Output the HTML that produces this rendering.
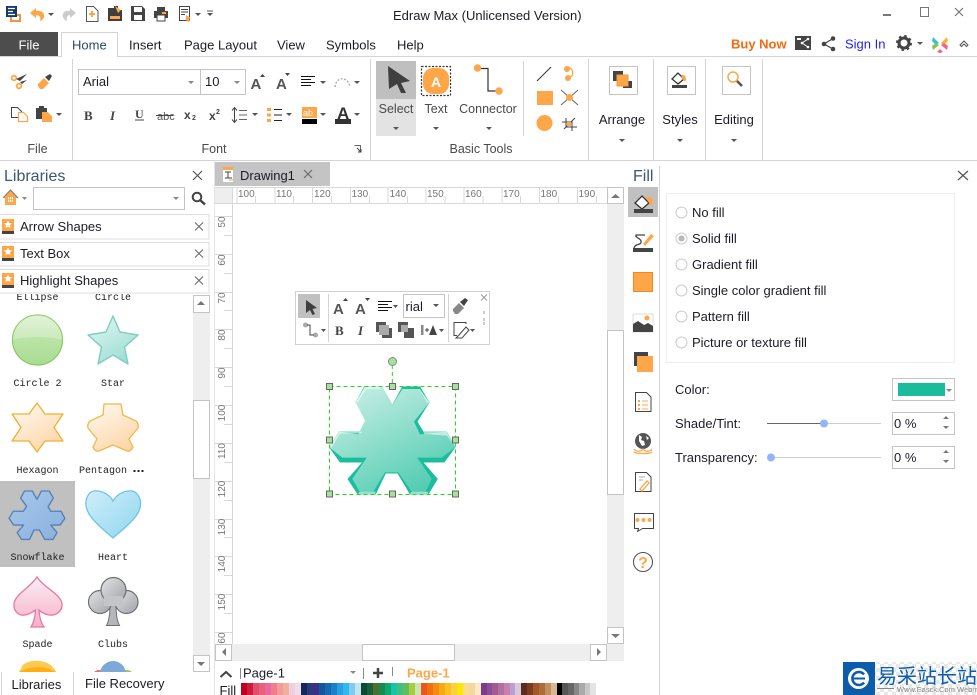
<!DOCTYPE html>
<html><head><meta charset="utf-8"><title>Edraw Max</title>
<style>
html,body{margin:0;padding:0;background:#fff;width:977px;height:695px;overflow:hidden}
svg{position:absolute;left:0;top:0}
text{font-family:"Liberation Sans","Noto Sans CJK SC",sans-serif;font-size:13px;fill:#1c1c28}
.m{font-family:"Liberation Mono",monospace;font-size:10px;fill:#222;text-anchor:middle}
.r{font-size:10px;fill:#777}
.mid{text-anchor:middle}
.g{fill:#4a4a4a;font-size:12.5px}
.c{fill:#555}
.o{fill:#ffa748}
.d{fill:#444}
.ln{stroke:#d4d4d4;stroke-width:1;fill:none}
.b{fill:#fff;stroke:#c4c4c4;stroke-width:1}
.tk{stroke:#d8d8d8;stroke-width:1;fill:none}
.h{fill:#a6e29a;stroke:#666;stroke-width:1}
#sw{position:absolute;left:241px;top:683px;height:12px;display:flex}
#sw i{display:block;width:6px;height:12px;flex:none}
#sw i:nth-child(n+41):nth-child(-n+47){width:5.714px}
#sw i:nth-child(n+54){width:5.571px}
</style></head><body>
<svg width="977" height="695" viewBox="0 0 977 695" xmlns="http://www.w3.org/2000/svg">
<defs>
<linearGradient id="tf" x1="0.2" y1="0" x2="0.8" y2="1"><stop offset="0" stop-color="#c6eee4"/><stop offset="1" stop-color="#4ecbb0"/></linearGradient>
<linearGradient id="gr" x1="0" y1="0" x2="0" y2="1"><stop offset="0" stop-color="#d8f0cc"/><stop offset=".45" stop-color="#bce4a8"/><stop offset="1" stop-color="#a8dc92"/></linearGradient>
<linearGradient id="te" x1="0.2" y1="0" x2="0.8" y2="1"><stop offset="0" stop-color="#e0f5f1"/><stop offset="1" stop-color="#98dcd2"/></linearGradient>
<linearGradient id="or" x1="0.2" y1="0" x2="0.8" y2="1"><stop offset="0" stop-color="#fff8ee"/><stop offset="1" stop-color="#fdd4a4"/></linearGradient>
<linearGradient id="bl" x1="0" y1="0" x2="1" y2="1"><stop offset="0" stop-color="#a8c8ea"/><stop offset="1" stop-color="#88b0de"/></linearGradient>
<linearGradient id="he" x1="0" y1="0" x2="1" y2="1"><stop offset="0" stop-color="#d0eef9"/><stop offset="1" stop-color="#8fd6f0"/></linearGradient>
<linearGradient id="pk" x1="0" y1="0" x2="0" y2="1"><stop offset="0" stop-color="#fdeef3"/><stop offset="1" stop-color="#f5b0c8"/></linearGradient>
<linearGradient id="gy" x1="0" y1="0" x2="1" y2="1"><stop offset="0" stop-color="#e4e4e6"/><stop offset="1" stop-color="#a0a2a6"/></linearGradient>
<pattern id="chk" width="8" height="8" patternUnits="userSpaceOnUse"><rect width="8" height="8" fill="#fff"/><rect width="4" height="4" fill="#e8e8e8"/><rect x="4" y="4" width="4" height="4" fill="#e8e8e8"/></pattern>
<clipPath id="lib"><rect x="0" y="294" width="193" height="378"/></clipPath>
<clipPath id="ftxt"><rect x="215" y="680" width="30" height="15"/></clipPath>
</defs>

<!-- title / quick access -->
<text x="393" y="20">Edraw Max (Unlicensed Version)</text>
<path d="M883 15h8" stroke="#777" stroke-width="2"/>
<rect x="920.500" y="7.500" width="8" height="9" fill="none" stroke="#777"/>
<path d="M955 8l8 8M963 8l-8 8" stroke="#777" stroke-width="1.200"/>

<path d="M14 15h6v6H11v-4" fill="none" stroke="#f5923e" stroke-width="2"/>
<rect x="6" y="6" width="11" height="11" fill="#173a6e"/>
<path d="M8 8.500h7M8 11.500h5M8 14.500h7" stroke="#fff" stroke-width="1.300"/>
<path d="M30 13l6-5v3c5-1 9 2 8 6-.5 2-2 3.500-4 4 1-3 0-6-4-6v3z" fill="#ffa748"/>
<path class="c" d="M48 13h6l-3 3z"/>
<path d="M76 13l-6-5v3c-5-1-8 2-7 6 .5 2 2 3.500 4 4-1-3 0-6 3-6v3z" fill="#ccc"/>
<path d="M86.500 6.500h7l4.500 4.500v10.500h-11.500z" fill="#fff" stroke="#555"/>
<path d="M92 11v6M89 14h6" stroke="#ffa748" stroke-width="2"/>
<path d="M108 8h6v-2h4v4h4v11h-14z" fill="#3f3f3f"/><path d="M115 6l6 4-3 3z" class="o"/><rect x="110" y="16" width="10" height="3" fill="#ffa748"/>
<path d="M131 6h11l3 3v12h-14z" fill="#444"/><rect x="134" y="7" width="8" height="5" fill="#fff"/><rect x="134" y="15" width="8" height="5" fill="#fff"/>
<rect x="154" y="11" width="14" height="7" fill="#444"/><rect x="157" y="7" width="8" height="4" fill="#444"/><rect x="157" y="15" width="8" height="6" fill="#fff" stroke="#444"/><rect x="162" y="12" width="4" height="2" fill="#ffa748"/>
<rect x="179.500" y="6.500" width="10" height="14" fill="#fff" stroke="#444"/><path d="M181 9.500h7M181 12h7M181 14.500h4" stroke="#444"/><path d="M186 15l5 3-2 1 1 2-2 1-1-2-1 1z" class="o"/>
<path class="c" d="M195 13h6l-3 3z"/>
<path class="c" d="M207 13h6l-3 3zM207 10.500h6v1h-6z"/>

<!-- tabs -->
<rect x="0" y="32" width="58" height="24" fill="#4d4d4d"/>
<text x="29" y="49.500" class="mid" style="fill:#fff">File</text>
<path d="M0 56.500H977" stroke="#d4d4d4"/>
<path d="M61.500 56.500V32.500H117.500V56.500" fill="#fff" stroke="#d4d4d4"/><path d="M62 56.500h55" stroke="#fff"/>
<text x="72" y="49.500" style="fill:#2a4a6a">Home</text>
<text x="129" y="49.500">Insert</text>
<text x="184" y="49.500">Page Layout</text>
<text x="277" y="49.500">View</text>
<text x="326" y="49.500">Symbols</text>
<text x="397" y="49.500">Help</text>
<text x="731" y="48.500" style="fill:#f26a0f;font-weight:bold;font-size:13px">Buy Now</text>
<rect x="795" y="36" width="16" height="14" fill="#444"/><path d="M797 38h4v2h-4z" fill="#fff"/><circle cx="808" cy="39" r="1.300" fill="#fff"/><circle cx="808" cy="47" r="1.300" fill="#fff"/><circle cx="802" cy="43" r="1.300" fill="#fff"/><path d="M808 39l-6 4 6 4" stroke="#fff" fill="none"/>
<circle cx="833" cy="38.500" r="2.300" fill="#444"/><circle cx="833" cy="49" r="2.300" fill="#444"/><circle cx="824" cy="44" r="2.300" fill="#444"/><path d="M833 38.500l-9 5.500 9 5" stroke="#444" fill="none" stroke-width="1.200"/>
<text x="845" y="48.500" style="fill:#1f1ff0">Sign In</text>
<circle cx="904" cy="43" r="5" fill="none" stroke="#444" stroke-width="3"/><circle cx="904" cy="43" r="7" fill="none" stroke="#444" stroke-width="2" stroke-dasharray="2.500 3"/>
<path class="c" d="M917 42h6l-3 3z"/>
<path d="M933 37l6 6-3 2-4-4z" fill="#35c0d8"/><path d="M947 37l-6 6 3 2 4-4z" fill="#ffb030"/><path d="M933 50l6-5-3-2-4 3z" fill="#8bc34a"/><path d="M947 50l-6-5 3-2 4 3z" fill="#f4608e"/><path d="M937 52l3-3 3 3-3 1z" fill="#f4608e"/>
<path d="M960 45l4-4 4 4-1.500 1.500-2.500-2.500-2.500 2.500z" fill="none" stroke="#555"/>

<!-- ribbon separators -->
<path class="ln" d="M72.500 59V160M370.500 59V160M523.500 61V136M588.500 59V160M653.500 59V160M705.500 59V160M762.500 59V160"/>
<path d="M0 160.500H977" stroke="#d4d4d4"/>

<!-- File group -->
<circle cx="14" cy="78" r="2.300" fill="none" stroke="#ffa748" stroke-width="1.800"/><circle cx="19" cy="86" r="2.300" fill="none" stroke="#ffa748" stroke-width="1.800"/>
<path d="M16 79l11-5-7 7zM20 82l7-2-5 4z" fill="#444"/>
<path d="M38 84l6-6 5 5-6 6h-3l-2-3z" class="o"/><path d="M45 77l5-3 2 2-3 5z" fill="#444"/>
<path d="M11.500 107.500h6l4 4v6h-10z" fill="#fff" stroke="#444"/><path d="M18.500 112.500h5l4 4v5h-9z" fill="#fff" stroke="#ffa748" stroke-width="1.200"/>
<rect x="36" y="108" width="11" height="11" fill="#444"/><rect x="39" y="106" width="5" height="3" fill="#444"/><path d="M42.500 112.500h5l4 4v5h-9z" fill="#ffa748" stroke="#ffa748"/>
<path class="c" d="M56 113h6l-3 3z"/>
<text x="37.500" y="153" class="mid g">File</text>

<!-- Font group -->
<rect class="b" x="78.500" y="69.500" width="122" height="25"/>
<rect class="b" x="200.500" y="69.500" width="45" height="25"/>
<text x="83" y="86">Arial</text>
<text x="205" y="86">10</text>
<path class="c" d="M188 81h6l-3 3zM234 81h6l-3 3z" style="fill:#888"/>
<text x="250.500" y="89" style="font-size:15px;fill:#555;font-weight:bold">A</text><path class="d" d="M260 77h5l-2.500-3z"/>
<text x="276" y="89" style="font-size:15px;fill:#555;font-weight:bold">A</text><path class="d" d="M285 73h5l-2.500 3z"/>
<path d="M301 76.500h14M301 79.500h10M301 82.500h14M301 85.500h10" stroke="#111"/>
<path class="c" d="M320 81h6l-3 3z"/>
<path d="M335 87c1-11 13-11 15 0" fill="none" stroke="#aaa" stroke-dasharray="2 1.500" stroke-width="1.300"/>
<path class="c" d="M354 81h6l-3 3z"/>
<text x="84" y="120" style="font:bold 13px 'Liberation Serif',serif;fill:#444">B</text>
<text x="110" y="120" style="font:italic bold 13px 'Liberation Serif',serif;fill:#444">I</text>
<text x="135" y="118" style="font:bold 12px 'Liberation Serif',serif;fill:#444">U</text><path d="M135 120h9" stroke="#444"/>
<text x="157" y="120" style="font-size:11px;fill:#555">abc</text><path d="M156 115.500h17" stroke="#444"/>
<text x="184" y="119" style="font:bold 12px 'Liberation Sans';fill:#444">x</text><text x="192" y="120" style="font:bold 7px 'Liberation Sans';fill:#444">2</text>
<text x="209" y="120" style="font:bold 12px 'Liberation Sans';fill:#444">x</text><text x="216" y="114" style="font:bold 7px 'Liberation Sans';fill:#444">2</text>
<path d="M234.500 108v14M232 110.500l2.500-3 2.500 3M232 119.500l2.500 3 2.500-3" fill="none" stroke="#444"/><path d="M239 110.500h8M239 115h8M239 119.500h8" stroke="#666"/>
<path class="c" d="M252 113h6l-3 3z"/>
<path d="M267 108h4v3h-4zM267 113.500h4v3h-4zM267 119h4v3h-4z" class="o"/><path d="M274 109.500h8M274 115h8M274 120.500h8" stroke="#222"/>
<path class="c" d="M286 113h6l-3 3z"/>
<rect x="302" y="107" width="15" height="11" fill="#ffa748"/><rect x="302" y="119" width="15" height="5" fill="#000"/>
<text x="303" y="116" style="font-size:9px;fill:#fff">ab</text>
<path class="c" d="M320 113h6l-3 3z"/>
<text x="337" y="119" style="font-size:17px;font-weight:bold;fill:#333">A</text><rect x="335" y="119" width="16" height="5" fill="#333"/>
<path class="c" d="M354 113h6l-3 3z"/>
<text x="214" y="153" class="mid g">Font</text>
<path d="M354.500 145.500h6v6" fill="none" stroke="#666"/><path d="M357 148l4 4M361 149v3h-3" stroke="#444" fill="none"/>

<!-- Basic Tools -->
<rect x="376" y="61" width="40" height="38" fill="#bfbfbf"/><rect x="376" y="99" width="40" height="37" fill="#e3e3e3"/>
<path d="M388 66l22 15-9 2 5 10-5 0-4-9-8 5z" fill="#3f3f3f"/>
<text x="396" y="113" class="mid g">Select</text>
<path class="c" d="M393 127h6l-3 3z"/>
<rect x="421.500" y="66.500" width="29" height="29" fill="none" stroke="#333" stroke-dasharray="2 1.500" stroke-width="1.200"/>
<rect x="423" y="68" width="26" height="26" rx="10" class="o"/>
<text x="436" y="87" class="mid" style="fill:#fff;font-weight:bold;font-size:14px">A</text>
<text x="436" y="113" class="mid g">Text</text>
<path class="c" d="M433 127h6l-3 3z"/>
<path d="M478 68.500h10V91h11" fill="none" stroke="#333" stroke-width="1.200"/>
<circle cx="477.500" cy="68" r="3.700" class="o"/><circle cx="499" cy="91" r="3.700" class="o"/>
<text x="488" y="113" class="mid g">Connector</text>
<path class="c" d="M486 127h6l-3 3z"/>
<path d="M537 81l14-14" stroke="#333"/>
<circle cx="567" cy="69" r="3" class="o"/><circle cx="568" cy="78" r="3" class="o"/><path d="M569 67c5 3 5 9 0 11" fill="none" stroke="#ffa748" stroke-width="1.300"/>
<rect x="537" y="91" width="16" height="14" class="o"/>
<path d="M561 90l17 15M578 90l-17 15" stroke="#666"/><circle cx="569.500" cy="97.500" r="3.500" class="o"/>
<circle cx="544.500" cy="123" r="8" class="o"/>
<path d="M566 118v9h11M562 122h10v9M564 129l11-11" fill="none" stroke="#444"/><rect x="567" y="122" width="4" height="4" class="o"/>
<text x="481" y="153" class="mid g">Basic Tools</text>

<!-- Arrange/Styles/Editing -->
<rect x="609.500" y="66.500" width="28" height="28" class="b"/>
<rect x="613" y="71" width="10" height="10" fill="#444"/><rect x="623" y="81" width="9" height="7" fill="#444"/><rect x="617" y="75" width="11" height="11" class="o" stroke="#f59a3a"/>
<text x="622" y="124" class="mid" style="font-size:13px">Arrange</text><path class="c" d="M619 139h6l-3 3z"/>
<rect x="667.500" y="66.500" width="28" height="28" class="b"/>
<path d="M672 79l6-6 6 6-6 5z" fill="#fff" stroke="#333" stroke-width="1.300"/><path d="M681 75c3-1 5 1 5 4l-1 3-3-4z" class="o"/><rect x="672" y="85" width="15" height="3" fill="#444"/>
<text x="680" y="124" class="mid" style="font-size:13px">Styles</text><path class="c" d="M677 139h6l-3 3z"/>
<rect x="722.500" y="66.500" width="28" height="28" class="b"/>
<circle cx="733" cy="77" r="5" fill="#fff" stroke="#ffa748" stroke-width="1.500"/><path d="M737 81l5 5" stroke="#555" stroke-width="2.500"/>
<text x="734" y="124" class="mid" style="font-size:13px">Editing</text><path class="c" d="M731 139h6l-3 3z"/>

<!-- Libraries -->
<text x="4" y="181" style="font-size:16px;fill:#3d5670">Libraries</text>
<path d="M193 171l9 9M202 171l-9 9" stroke="#555" stroke-width="1.200"/>
<path d="M3 198l7.500-8 7.500 8h-2v7H5v-7z" class="o"/><path d="M8 197h5v5H8z" fill="#fff"/><path d="M9.500 197v5M11.500 197v5M8 199.500h5" stroke="#ffa748" stroke-width=".8"/>
<path d="M3 198l7.500-8 7.500 8" fill="none" stroke="#777"/>
<path d="M22 197h5l-2.500 3z" fill="#888"/>
<rect class="b" x="33.500" y="187.500" width="151" height="22"/>
<path d="M173 197h6l-3 3z" fill="#888"/>
<circle cx="197" cy="197" r="4.300" fill="none" stroke="#444" stroke-width="2"/><path d="M200 200l5 4.500" stroke="#444" stroke-width="2.500"/>

<rect x="-2" y="214.500" width="211" height="24.500" fill="#fff" stroke="#dcdcdc"/>
<rect x="-2" y="242.500" width="211" height="23.500" fill="#fff" stroke="#dcdcdc"/>
<rect x="-2" y="269.500" width="211" height="23.500" fill="#fff" stroke="#dcdcdc"/>
<rect x="2" y="219" width="12" height="12" class="o"/><rect x="2" y="231" width="12" height="3" fill="#444"/><path d="M8 220.500l1.200 2.500 2.800.3-2 1.900.5 2.800-2.500-1.300-2.500 1.300.5-2.800-2-1.900 2.800-.3z" fill="#fff"/>
<rect x="2" y="246" width="12" height="12" class="o"/><rect x="2" y="258" width="12" height="3" fill="#444"/><path d="M8 247.500l1.200 2.500 2.800.3-2 1.900.5 2.800-2.500-1.300-2.500 1.300.5-2.800-2-1.900 2.800-.3z" fill="#fff"/>
<rect x="2" y="273" width="12" height="12" class="o"/><rect x="2" y="285" width="12" height="3" fill="#444"/><path d="M8 274.500l1.200 2.500 2.800.3-2 1.900.5 2.800-2.500-1.300-2.500 1.300.5-2.800-2-1.900 2.800-.3z" fill="#fff"/>
<text x="20" y="231">Arrow Shapes</text>
<text x="20" y="258">Text Box</text>
<text x="20" y="285">Highlight Shapes</text>
<path d="M195 222.500l8 8M203 222.500l-8 8M195 249.500l8 8M203 249.500l-8 8M195 276.500l8 8M203 276.500l-8 8" stroke="#666"/>

<!-- library scrollbar -->
<rect x="193" y="295" width="17" height="377" fill="#eee"/>
<rect class="b" x="193.500" y="295.500" width="16" height="17"/><path d="M197 305h8l-4-4z" fill="#777"/>
<rect class="b" x="193.500" y="400.500" width="16" height="78"/>
<rect class="b" x="193.500" y="655.500" width="16" height="16"/><path d="M197 662h8l-4 4z" fill="#777"/>

<!-- library shapes -->
<g clip-path="url(#lib)">
<text x="37.500" y="300" class="m">Ellipse</text><text x="113" y="300" class="m">Circle</text>
<circle cx="37.500" cy="340" r="25" fill="url(#gr)" stroke="#8cc866" stroke-width="1.200"/>
<path d="M13 340c8-4 40-4 49 0 0-16-12-25-24.500-25S13 324 13 340z" fill="#fff" opacity=".25"/>
<path d="M113 316L120 332 138 335 124.500 347 128 364 113 355 98 364 101.500 347 88 335 106 332Z" fill="url(#te)" stroke="#7fcdc0" stroke-width="1.400" stroke-linejoin="round"/>
<text x="37.500" y="386" class="m">Circle 2</text><text x="113" y="386" class="m">Star</text>
<path d="M37 403L45 414 63 414 54 427.500 63 441 45 441 37 452 29 441 12 441 21 427.500 12 414 29 414Z" fill="url(#or)" stroke="#f0b030" stroke-width="1.300" stroke-linejoin="round"/>
<path d="M104 404H121L123 415 136 421Q139 424 138 428L129 439 133 447Q131 452 127 451L113 445 99 451Q95 452 93 447L97 439 88 428Q87 424 90 421L103 415Z" fill="url(#or)" stroke="#f0b84a" stroke-width="1.300"/>
<text x="37.500" y="473" class="m">Hexagon</text><text x="103" y="473" class="m">Pentagon</text>
<path d="M133.500 470h2v2h-2zM137.500 470h2v2h-2zM141.500 470h2v2h-2z" fill="#222"/>
<rect x="0" y="481" width="75" height="86" fill="#c0c0c0"/>
<g transform="translate(-10.700,445.250) scale(.148,.15)">
<path d="M238 305L290 305 322 360 352 305 405 305 433 352 397 410 415 440 485 440 511 487 478 532 415 532 458 582 430 628 375 628 338 565 302 565 272 628 218 628 188 582 232 532 165 532 133 487 162 440 230 440 252 407 212 352Z" fill="url(#bl)" stroke="#5680b4" stroke-width="9" stroke-linejoin="round"/>
</g>
<path d="M113 501C108 492 99 490.500 94 491C88 492 85.500 499 86 505C86.500 517 103 529 113 538C123 529 140 517 140.500 505C141 499 138 492 132 491C127 490.500 118 492 113 501Z" fill="url(#he)" stroke="#6cc4e6" stroke-width="1.300"/>
<text x="37.500" y="560" class="m">Snowflake</text><text x="113" y="560" class="m">Heart</text>
<path d="M37 577C44 588 61 594 62 604C62.500 612 55 616 49 615C44 614 41 612 39 610C39.500 618 41 623 44 627H31C33.500 623 35 618 35.500 610C33 612 30 614 25 615C19 616 13.500 612 14 604C15 594 30 588 37 577Z" fill="url(#pk)" stroke="#e878a4" stroke-width="1.300"/>
<path d="M110 605C110 615 109 621 106.500 625.500H119.500C117 621 116 615 116 605Z" fill="#b4b6ba" stroke="#6e7076"/>
<circle cx="100" cy="602" r="11.500" fill="url(#gy)" stroke="#6e7076" stroke-width="1.200"/>
<circle cx="126.500" cy="602" r="11.500" fill="url(#gy)" stroke="#6e7076" stroke-width="1.200"/>
<circle cx="113.500" cy="590" r="12.500" fill="url(#gy)" stroke="#6e7076" stroke-width="1.200"/>
<path d="M104 596h19v10h-19z" fill="#c4c5c8"/>
<text x="37.500" y="647" class="m">Spade</text><text x="113" y="647" class="m">Clubs</text>
<circle cx="37.500" cy="682" r="21" fill="#ffb010"/><path d="M20 672c8-6 26-7 35 0l-3-6c-9-7-24-7-30 0z" fill="#ffc850"/>
<circle cx="99" cy="677" r="7" fill="#ef6c6c"/><circle cx="127" cy="677" r="7" fill="#90cc60"/><circle cx="113" cy="674" r="13" fill="#7ea8d8"/>
</g>
<path d="M1.500 672V695M73.500 672V695" class="ln"/>
<text x="11.500" y="689">Libraries</text>
<text x="85" y="688">File Recovery</text>
<path d="M214.500 161V695" class="ln" style="stroke:#e4e4e4"/>

<!-- Document tab -->
<rect x="215" y="162" width="115" height="24" fill="#c4c4c4"/>
<rect x="223" y="167" width="10" height="15" fill="#fff"/><rect x="223" y="167" width="10" height="3" class="o"/><path d="M225 172h6M228 172v6M225 178h7" stroke="#444" fill="none"/><path d="M229 180h4" stroke="#ffa748"/>
<text x="240" y="180">Drawing1</text>
<path d="M304 170l8 8M312 170l-8 8" stroke="#666" stroke-width="1.100"/>

<!-- Rulers -->
<rect x="215" y="187" width="17" height="16" fill="#eee"/>
<path class="tk" d="M215 203.500H607M232.500 187V644M215 187.500H607"/>
<path class="tk" d="M237 187V203M275 187V203M312.500 187V203M350.500 187V203M388 187V203M426 187V203M464 187V203M502 187V203M539.500 187V203M577.500 187V203"/>
<path class="tk" d="M255.500 196V203M293.500 196V203M331.500 196V203M369.500 196V203M407.500 196V203M445 196V203M483 196V203M520.500 196V203M558.500 196V203M596.500 196V203"/>
<text x="238" y="197" class="r">100</text><text x="276" y="197" class="r">110</text><text x="314" y="197" class="r">120</text><text x="351.500" y="197" class="r">130</text><text x="389.500" y="197" class="r">140</text><text x="427" y="197" class="r">150</text><text x="465" y="197" class="r">160</text><text x="503" y="197" class="r">170</text><text x="540.500" y="197" class="r">180</text><text x="578.500" y="197" class="r">190</text>
<path class="tk" d="M215 216.500H232M215 254.500H232M215 292.500H232M215 329.500H232M215 367.500H232M215 405.500H232M215 443.500H232M215 481.500H232M215 519.500H232M215 556.500H232M215 594.500H232M215 632.500H232"/>
<path class="tk" d="M224 235.500H232M224 273.500H232M224 310.500H232M224 348.500H232M224 386.500H232M224 424.500H232M224 462.500H232M224 500.500H232M224 537.500H232M224 575.500H232M224 613.500H232"/>
<text class="r mid" transform="translate(225,222) rotate(-90)">50</text>
<text class="r mid" transform="translate(225,260) rotate(-90)">60</text>
<text class="r mid" transform="translate(225,298) rotate(-90)">70</text>
<text class="r mid" transform="translate(225,335) rotate(-90)">80</text>
<text class="r mid" transform="translate(225,373) rotate(-90)">90</text>
<text class="r mid" transform="translate(225,413) rotate(-90)">100</text>
<text class="r mid" transform="translate(225,451) rotate(-90)">110</text>
<text class="r mid" transform="translate(225,489) rotate(-90)">120</text>
<text class="r mid" transform="translate(225,527) rotate(-90)">130</text>
<text class="r mid" transform="translate(225,564) rotate(-90)">140</text>
<text class="r mid" transform="translate(225,602) rotate(-90)">150</text>
<text class="r mid" transform="translate(225,638) rotate(-90)">60</text>

<!-- Canvas scrollbars -->
<rect x="607" y="187" width="17" height="474" fill="#eee"/>
<rect class="b" x="607.500" y="187.500" width="16" height="16"/><path d="M611 198h9l-4.500-4z" fill="#777"/>
<rect class="b" x="607.500" y="330.500" width="16" height="164"/>
<rect class="b" x="607.500" y="627.500" width="16" height="16"/><path d="M611 634h9l-4.500 4z" fill="#777"/>
<rect x="215" y="644" width="392" height="17" fill="#eee"/>
<rect class="b" x="215.500" y="644.500" width="16" height="16"/><path d="M226 648v8l-4-4z" fill="#777"/>
<rect class="b" x="362.500" y="644.500" width="92" height="16"/>
<rect class="b" x="590.500" y="644.500" width="16" height="16"/><path d="M597 648v8l4-4z" fill="#777"/>

<!-- Floating toolbar -->
<rect x="295.500" y="291.500" width="194" height="53" fill="#fff" stroke="#d0d0d0"/>
<rect x="298" y="294" width="22" height="24" fill="#c0c0c0"/>
<path d="M306 300l11 8-4.500 1 2.500 5-2.500 1-2.500-5-4 3z" fill="#3f3f3f"/>
<path class="ln" d="M328.500 294V342M448.500 294V342"/>
<text x="333" y="314" style="font-size:15px;fill:#555;font-weight:bold">A</text><path class="d" d="M343 301h5l-2.500-3z"/>
<text x="355" y="314" style="font-size:15px;fill:#555;font-weight:bold">A</text><path class="d" d="M365 298h5l-2.500 3z"/>
<path d="M378 301.500h14M378 304.500h10M378 307.500h14M378 310.500h10" stroke="#111"/>
<path class="c" d="M393 305h5l-2.500 3z"/>
<rect class="b" x="403.500" y="294.500" width="41" height="23"/>
<text x="405.500" y="311">rial</text>
<path class="c" d="M433 304h6l-3 3z"/>
<path d="M453 309l6-6 5 5-6 6h-3l-2-3z" fill="#888"/><path d="M460 302l5-4 3 2-4 6z" fill="#444"/>
<path d="M481 294.500l6 6M487 294.500l-6 6" stroke="#999"/>
<path d="M483 311h2v3h-2zM483 318h2v3h-2zM483 322h2v3h-2z" fill="#ccc"/>
<circle cx="305.500" cy="325" r="2.500" fill="#aaa"/><circle cx="315.500" cy="335" r="2.500" fill="#aaa"/><path d="M307 325h3v10h4" fill="none" stroke="#444"/>
<path class="c" d="M321 329h5l-2.500 3z"/>
<text x="335" y="335" style="font:bold 13px 'Liberation Serif',serif;fill:#444">B</text>
<text x="358" y="335" style="font:italic bold 13px 'Liberation Serif',serif;fill:#444">I</text>
<rect x="376" y="322" width="10" height="10" fill="#555"/><rect x="382" y="328" width="10" height="10" fill="#555"/><rect x="379" y="325" width="10" height="10" fill="#aaa"/>
<rect x="398" y="322" width="10" height="10" fill="#555"/><rect x="404" y="328" width="10" height="10" fill="#555"/><rect x="401" y="325" width="7" height="7" fill="#aaa"/>
<rect x="421" y="325" width="2.500" height="10" fill="#888"/><path d="M425 330h4M427 328v4" stroke="#444"/><path d="M433 325l4 10h-8z" fill="#444"/>
<path class="c" d="M439 329h5l-2.500 3z"/>
<path d="M466 324v-1.500h-12v13h3" fill="none" stroke="#444"/><path d="M456 338l3-3 7-8 3 3-7 8z" fill="#fff" stroke="#444"/>
<path class="c" d="M470 329h5l-2.500 3z"/>

<!-- Selected snowflake -->
<g transform="translate(285,285) scale(.3333)">
<path d="M322 240V305" stroke="#1fdc1f" stroke-width="3" stroke-dasharray="12 9" fill="none"/>
<path d="M238 305L290 305 322 360 352 305 405 305 433 352 397 410 415 440 485 440 511 487 478 532 415 532 458 582 430 628 375 628 338 565 302 565 272 628 218 628 188 582 232 532 165 532 133 487 162 440 230 440 252 407 212 352Z" fill="#1abd9c" stroke="#1abd9c" stroke-width="1" stroke-linejoin="round"/>
<path d="M240 305L290 305 322 360 352 312 404 312 433 352 387 410 405 448 485 440 511 487 470 518 397 518 440 582 422 620 380 620 340 562 300 562 265 620 224 620 202 582 245 518 172 518 133 487 162 440 220 448 240 407 212 352Z" fill="url(#tf)"/>
<path d="M240 305L290 305 286 312 244 312 218 352 212 352ZM162 440L232 440 228 445 165 446 142 484 133 487ZM415 440L485 440 505 480 486 452 418 447Z M404 312L433 352 426 352 402 312Z M224 620L272 620 270 628 218 628Z M380 620L428 620 430 628 375 628Z" fill="#fff" opacity=".55"/>
</g>
<rect x="329.500" y="386.500" width="126" height="108" fill="none" stroke="#1fdc1f" stroke-dasharray="4 3"/>
<circle cx="392.500" cy="361.500" r="4" class="h" style="stroke:#888"/>
<rect class="h" x="326.500" y="383.500" width="6" height="6"/><rect class="h" x="389.500" y="383.500" width="6" height="6"/><rect class="h" x="452.500" y="383.500" width="6" height="6"/>
<rect class="h" x="326.500" y="437" width="6" height="6"/><rect class="h" x="452.500" y="437" width="6" height="6"/>
<rect class="h" x="326.500" y="491" width="6" height="6"/><rect class="h" x="389.500" y="491" width="6" height="6"/><rect class="h" x="452.500" y="491" width="6" height="6"/>

<!-- Bottom page bar -->
<path d="M220.500 677l5.500-5 5.500 5" fill="none" stroke="#444" stroke-width="2"/>
<path d="M240.500 668V679M363.500 668V679M392.500 667V676" stroke="#888"/>
<text x="243" y="677.500">Page-1</text>
<path d="M350 671h6l-3 3z" fill="#888"/>
<path d="M378 668v10M373 673h10" stroke="#444" stroke-width="2.500"/>
<text x="407" y="677.500" style="font-weight:bold;fill:#ffa748;font-size:13px">Page-1</text>
<g clip-path="url(#ftxt)"><text x="219.500" y="695">Fill</text></g>

<!-- Fill panel -->
<text x="633" y="181" style="font-size:16px;fill:#3d5670">Fill</text>
<path d="M958 171l10 9M968 171l-10 9" stroke="#555" stroke-width="1.200"/>
<path d="M659.500 166V695" stroke="#d4d4d4"/>
<rect x="628" y="187" width="30" height="30" fill="#c0c0c0"/>
<path d="M635 203l7-7 7 7-7 6z" fill="#fff" stroke="#333" stroke-width="1.300"/><path d="M646 197c4-1 7 1 7 5l-2 4-4-6z" class="o"/><rect x="634" y="209" width="19" height="4" fill="#444"/>
<path d="M634 248c1-5 8-2 7-7-.5-3-6-3-5-6h9" fill="none" stroke="#444" stroke-width="1.300"/><path d="M645 246l-2-2 8-10 3 2z" class="o"/><rect x="633" y="248" width="20" height="4" fill="#444"/>
<rect x="633.500" y="272.500" width="19" height="19" class="o" stroke="#f08a1d"/>
<path d="M633 314h20v18h-20z" fill="#fff" stroke="#bbb" stroke-width=".5"/><path d="M633 332v-8l5-3 6 4 4-2 5 3v6z" fill="#444"/><circle cx="647" cy="318" r="2.500" class="o"/>
<rect x="634" y="352" width="14" height="14" fill="#444"/><rect x="637" y="356" width="16" height="16" class="o"/>
<path d="M635.500 392.500h11l4.500 4.500v14.500h-15.500z" fill="#fff" stroke="#444"/><path d="M638 400h2v2h-2zM638 404h2v2h-2zM638 408h2v2h-2z" class="o"/><path d="M642 401h6M642 405h6M642 409h6" stroke="#ffa748"/>
<circle cx="643" cy="441" r="8" fill="#555"/><path d="M639 435l3 2-1 3 3 1 1 4-3 1-3-5zM646 436l3 2-2 2z" fill="#fff"/><path d="M634 449c2 3 7 3 9 0 2 3 7 3 9 0M634 452c2 2 16 2 18 0" fill="none" stroke="#ffa748" stroke-width="1.300"/>
<path d="M635.500 472.500h11l4.500 4.500v14.500h-15.500z" fill="#fff" stroke="#444"/><path d="M640 489l7-8 2 2-7 8z" fill="none" stroke="#ffa748" stroke-width="1.300"/><path d="M639 477h6M639 480h4" stroke="#aaa"/>
<path d="M634.500 513.500h19v15h-11l-5 3 1-3h-4z" fill="#fff" stroke="#444" stroke-linejoin="round"/><circle cx="637.500" cy="520" r="2" class="o"/><circle cx="643.500" cy="520" r="2" class="o"/><circle cx="649.500" cy="520" r="2" class="o"/>
<circle cx="643" cy="562" r="9.500" fill="#fff" stroke="#555" stroke-width="1.100"/>
<text x="643" y="568" class="mid" style="font-weight:bold;font-size:16px;fill:#ffa748">?</text>

<rect x="666.500" y="193.500" width="288" height="169" fill="#fff" stroke="#eee"/>
<g fill="#fff" stroke="#ccc">
<circle cx="681.500" cy="212.500" r="5.500"/><circle cx="681.500" cy="238.500" r="5.500"/><circle cx="681.500" cy="264.500" r="5.500"/><circle cx="681.500" cy="290.500" r="5.500"/><circle cx="681.500" cy="316.500" r="5.500"/><circle cx="681.500" cy="342.500" r="5.500"/>
</g>
<circle cx="681.500" cy="238.500" r="3" fill="#b8b8b8"/>
<text x="692" y="217">No fill</text>
<text x="692" y="243">Solid fill</text>
<text x="692" y="269">Gradient fill</text>
<text x="692" y="295">Single color gradient fill</text>
<text x="692" y="321">Pattern fill</text>
<text x="692" y="347">Picture or texture fill</text>
<text x="675" y="394">Color:</text>
<text x="675" y="428">Shade/Tint:</text>
<text x="675" y="462">Transparency:</text>
<rect class="b" x="892.500" y="378.500" width="62" height="22"/><rect x="898" y="383" width="47" height="13" fill="#1abc9c"/><path d="M946 389h6l-3 3z" fill="#888"/>
<path d="M767 423.500h57" stroke="#666"/><path d="M824 423.500h57" stroke="#ccc"/><circle cx="824" cy="423.500" r="4" fill="#94b4f8"/>
<path d="M771 457.500h110" stroke="#ccc"/><circle cx="771" cy="457.500" r="4" fill="#94b4f8"/>
<rect class="b" x="892.500" y="412.500" width="62" height="22"/><text x="894" y="428">0 %</text>
<rect class="b" x="892.500" y="446.500" width="62" height="22"/><text x="894" y="462">0 %</text>
<path d="M943 419h6l-3-3zM943 426h6l-3 3zM943 453h6l-3-3zM943 460h6l-3 3z" fill="#777"/>

<!-- Watermark -->
<rect x="843" y="662" width="134" height="33" fill="url(#chk)"/>
<rect x="843" y="662" width="32" height="33" fill="#0b5cab"/>
<circle cx="858.500" cy="678.500" r="10.500" fill="#fff"/>
<path d="M864 674.500a6.500 6.500 0 1 0 0 8" fill="none" stroke="#0b5cab" stroke-width="2.500"/><path d="M853 678.500h12" stroke="#0b5cab" stroke-width="2"/>
<text x="877" y="683" style="font-family:'Noto Sans CJK SC','WenQuanYi Zen Hei',sans-serif;font-size:20px;fill:#0b5cab">易采站长站</text>
<path d="M877 688.500h17" stroke="#888"/>
<text x="897" y="692" style="font-size:7.500px;fill:#888">Www.Easck.Com Webmaster</text>
</svg>
<div id="sw"><i style="background:#c00020"></i><i style="background:#d01a3c"></i><i style="background:#e0506c"></i><i style="background:#e8607c"></i><i style="background:#e868a0"></i><i style="background:#f07c8c"></i><i style="background:#f49a9a"></i><i style="background:#f0b09a"></i><i style="background:#eed0e0"></i><i style="background:#f4dce8"></i><i style="background:#14285c"></i><i style="background:#2c3a78"></i><i style="background:#3e2f86"></i><i style="background:#14569c"></i><i style="background:#1668b0"></i><i style="background:#1c80c8"></i><i style="background:#28a0e0"></i><i style="background:#30b8f0"></i><i style="background:#80ccee"></i><i style="background:#c0e4f0"></i><i style="background:#0c4a34"></i><i style="background:#18603c"></i><i style="background:#4c7030"></i><i style="background:#148c50"></i><i style="background:#10a870"></i><i style="background:#18c4a8"></i><i style="background:#40c080"></i><i style="background:#60bc60"></i><i style="background:#a8cc40"></i><i style="background:#cce4b0"></i><i style="background:#e85820"></i><i style="background:#f07010"></i><i style="background:#f48c10"></i><i style="background:#f8a810"></i><i style="background:#fcc020"></i><i style="background:#fcd040"></i><i style="background:#fce800"></i><i style="background:#f8dc90"></i><i style="background:#f4d8a0"></i><i style="background:#fae8c8"></i><i style="background:#7c3c88"></i><i style="background:#8c4c98"></i><i style="background:#a05c90"></i><i style="background:#b070a0"></i><i style="background:#c880b0"></i><i style="background:#b8a0d0"></i><i style="background:#d8c8e0"></i><i style="background:#5c2c1c"></i><i style="background:#7c3c20"></i><i style="background:#a05828"></i><i style="background:#b06c38"></i><i style="background:#c09060"></i><i style="background:#d8b890"></i><i style="background:#000"></i><i style="background:#555"></i><i style="background:#666"></i><i style="background:#888"></i><i style="background:#aaa"></i><i style="background:#c8c8c8"></i><i style="background:#e4e4e4"></i></div>
</body></html>
